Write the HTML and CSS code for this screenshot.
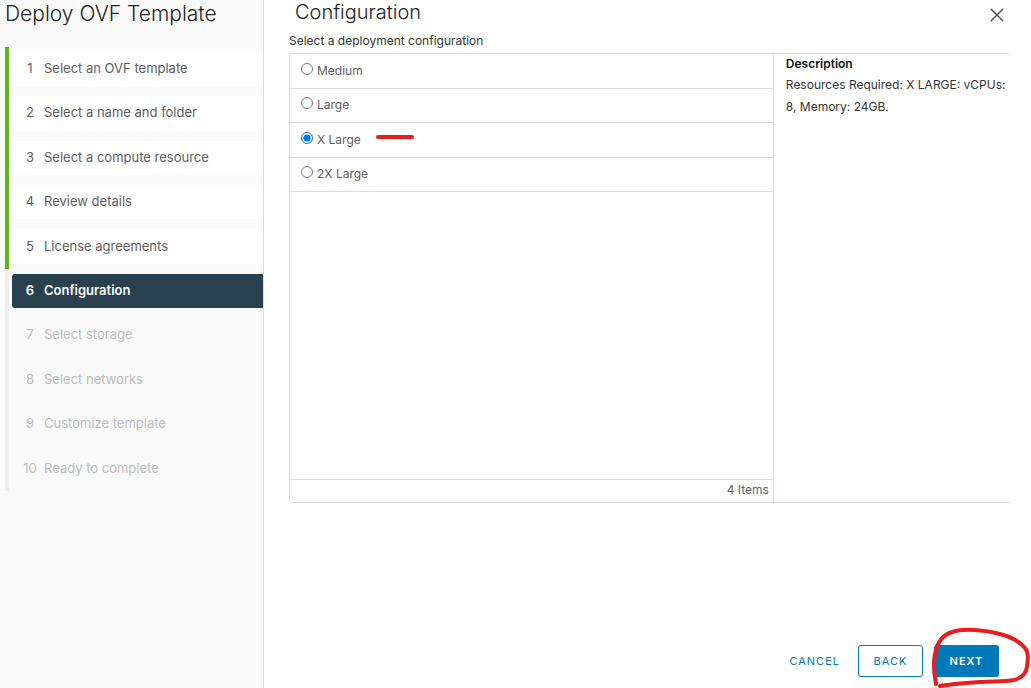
FILE: index.html
```html
<!DOCTYPE html>
<html lang="en">
<head>
<meta charset="utf-8">
<meta name="viewport" content="width=device-width, initial-scale=1">
<title>Deploy OVF Template</title>
<link rel="stylesheet" href="styles.css">
</head>
<body>
<div class="wizard">
  <nav class="sidebar" aria-label="Wizard steps">
    <h1 class="wizard-title">Deploy OVF Template</h1>
    <ol class="steps">
      <li class="step done"><button type="button" class="step-link"><span class="step-number">1</span>Select an OVF template</button></li>
      <li class="step done"><button type="button" class="step-link"><span class="step-number">2</span>Select a name and folder</button></li>
      <li class="step done"><button type="button" class="step-link"><span class="step-number">3</span>Select a compute resource</button></li>
      <li class="step done"><button type="button" class="step-link"><span class="step-number">4</span>Review details</button></li>
      <li class="step done"><button type="button" class="step-link"><span class="step-number">5</span>License agreements</button></li>
      <li class="step current" aria-current="step"><button type="button" class="step-link"><span class="step-number">6</span>Configuration</button></li>
      <li class="step"><button type="button" class="step-link" disabled><span class="step-number">7</span>Select storage</button></li>
      <li class="step"><button type="button" class="step-link" disabled><span class="step-number">8</span>Select networks</button></li>
      <li class="step"><button type="button" class="step-link" disabled><span class="step-number">9</span>Customize template</button></li>
      <li class="step"><button type="button" class="step-link" disabled><span class="step-number">10</span>Ready to complete</button></li>
    </ol>
  </nav>
  <main class="page">
    <header class="page-header">
      <h2 class="page-title">Configuration</h2>
      <button type="button" class="close" aria-label="Close">
        <svg width="14" height="14" viewBox="0 0 14 14" fill="none" stroke="#444" stroke-width="1.3" stroke-linecap="round"><path d="M1.2 1.2 12.8 12.8M12.8 1.2 1.2 12.8"/></svg>
      </button>
    </header>
    <p class="page-hint" id="hint">Select a deployment configuration</p>
    <div class="panel">
      <section class="grid">
        <div class="options" role="radiogroup" aria-labelledby="hint">
          <label class="option"><input type="radio" name="size" class="radio"><span>Medium</span></label>
          <label class="option"><input type="radio" name="size" class="radio"><span>Large</span></label>
          <label class="option"><input type="radio" name="size" class="radio" checked><span>X Large</span>
            <svg class="marker-line" width="40" height="6" viewBox="0 0 40 6" fill="none" stroke="#e71d1e" stroke-width="4" stroke-linecap="round"><path d="M3 3H37"/></svg>
          </label>
          <label class="option"><input type="radio" name="size" class="radio"><span>2X Large</span></label>
        </div>
        <div class="grid-footer">4 Items</div>
      </section>
      <section class="description">
        <h3 class="description-title">Description</h3>
        <p class="description-text">Resources Required: X LARGE: vCPUs: 8, Memory: 24GB.</p>
      </section>
    </div>
    <footer class="actions">
      <button type="button" class="btn btn-link">CANCEL</button>
      <button type="button" class="btn btn-outline">BACK</button>
      <div class="next-wrap">
        <button type="button" class="btn btn-primary">NEXT</button>
        <svg class="marker-circle" width="101" height="62" viewBox="0 0 101 62" fill="none" stroke="#e71d1e" stroke-width="4" stroke-linecap="round" stroke-linejoin="round"><path d="M6 58C4 48 3 37 5 28C7 17 12 9 22 6C34 2 56 4 70 8C82 11 90 16 95 22C99 27 98 34 97 41C96 48 92 52 84 54C74 56 62 55 50 56C34 57 20 58 10 60"/></svg>
      </div>
    </footer>
  </main>
</div>
</body>
</html>
```
FILE: styles.css
```css
* {
  box-sizing: border-box;
}

body {
  margin: 0;
  background: #fff;
  color: #5e5e5e;
  font-family: Inter, "Liberation Sans", sans-serif;
  font-size: 12px;
}

h1, h2, h3, p, ol {
  margin: 0;
  padding: 0;
}

button {
  margin: 0;
  border: 0;
  padding: 0;
  background: none;
  color: inherit;
  font: inherit;
}

.wizard {
  display: flex;
  min-height: 100vh;
}

.sidebar {
  flex: 0 0 264px;
  border-right: 1px solid #ddd;
  background: #fafafa;
}

.wizard-title {
  padding: 2px 5px 21px;
  color: #222;
  font-size: 21px;
  font-weight: 300;
  line-height: 24px;
}

.steps {
  display: grid;
  grid-template-rows: repeat(10, 1fr);
  min-height: 444px;
  margin-left: 5px;
  list-style: none;
}

.step {
  border-left: 4px solid #eee;
  padding: 5px 0 5px 3px;
}

.step.done {
  border-color: #60b515;
}

.step-link {
  display: flex;
  align-items: center;
  width: 100%;
  height: 34px;
  border-radius: 3px 0 0 3px;
  padding-bottom: 2px;
  font-size: 13px;
  text-align: left;
}

.step-number {
  width: 26px;
  margin-right: 6px;
  padding-left: 10px;
  text-align: center;
}

.step-link:disabled {
  color: #bcbcbc;
}

.done .step-link {
  background: #fff;
}

.current .step-link {
  background: #29414e;
  color: #fff;
  font-weight: 600;
}

.page {
  display: flex;
  flex: 1;
  flex-direction: column;
  min-width: 0;
  padding: 0 21px 11px 25px;
}

.page-header {
  display: flex;
  justify-content: space-between;
  padding: 0 6px;
}

.page-title {
  color: #222;
  font-size: 20px;
  font-weight: 300;
  line-height: 24px;
}

.close {
  display: flex;
  padding-top: 8px;
}

.page-hint {
  padding: 9px 0 4px;
  color: #333;
  line-height: 16px;
}

.panel {
  display: flex;
  min-height: 450px;
  border: 1px solid #ddd;
  border-right: 0;
  border-radius: 3px 0 0 3px;
}

.grid {
  display: flex;
  flex: 0 0 67.2%;
  flex-direction: column;
  border-right: 1px solid #ddd;
}

.options {
  display: grid;
  grid-auto-rows: 1fr;
  min-height: 138px;
}

.option {
  display: flex;
  align-items: center;
  border-bottom: 1px solid #ddd;
  padding: 0 0 1px 11px;
}

.radio {
  width: 12px;
  height: 12px;
  margin: 0 4px 3px 0;
}

.marker-line {
  margin: 0 0 4px 14px;
}

.grid-footer {
  margin-top: auto;
  border-top: 1px solid #ddd;
  padding: 2px 4px 4px;
  line-height: 16px;
  text-align: right;
}

.description {
  flex: 1;
  min-width: 0;
  padding: 0 4px 0 12px;
}

.description-title {
  color: #111;
  font-size: 12px;
  font-weight: 600;
  line-height: 20px;
}

.description-text {
  color: #333;
  line-height: 22px;
}

.actions {
  display: flex;
  justify-content: flex-end;
  margin-top: auto;
  padding-right: 11px;
}

.btn {
  height: 32px;
  border: 1px solid transparent;
  border-radius: 3px;
  padding: 0 14px;
  color: #0079b8;
  font-size: 11px;
  font-weight: 400;
  letter-spacing: 1px;
}

.btn-link {
  margin-right: 3px;
}

.btn-outline {
  width: 65px;
  border-color: #0079b8;
}

.btn-primary {
  width: 65px;
  background: #0079b8;
  color: #fff;
  font-weight: 600;
}

.next-wrap {
  position: relative;
  margin-left: 11px;
}

.marker-circle {
  position: absolute;
  top: -19px;
  left: -4px;
  pointer-events: none;
}
```
